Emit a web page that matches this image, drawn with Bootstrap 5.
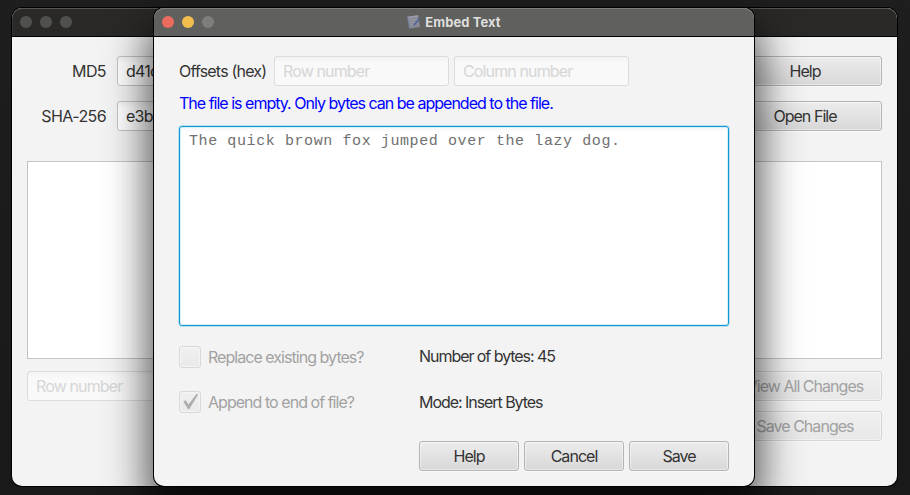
<!DOCTYPE html>
<html lang="en">
<head>
<meta charset="utf-8">
<meta name="viewport" content="width=device-width, initial-scale=1">
<title>Embed Text</title>
<link href="https://cdn.jsdelivr.net/npm/bootstrap@5.3.0/dist/css/bootstrap.min.css" rel="stylesheet">
<style>
  body { background: linear-gradient(180deg, #1e1e1e, #1b1b1b 50%, #191919); font-family: Inter, "Liberation Sans", sans-serif; font-size: 16px; line-height: 20px; letter-spacing: -.96px; color: #333; width: 910px; height: 495px; }
  .win { top: 8px; height: 478px; background: #f3f3f3; border-radius: 10px; box-shadow: 0 0 0 1px #000; }
  .win-main { left: 12px; width: 885px; }
  .win-dialog { left: 154px; width: 600px; box-shadow: 0 0 0 1px #000, 0 22px 42px 6px rgba(0,0,0,.68); }
  .titlebar { height: 29px; flex: none; background: #2a2927; border-bottom: 1px solid #000; border-radius: 10px 10px 0 0; box-shadow: inset 0 1px 0 #555, inset 1px 0 0 -0.5px #444; padding-left: 8px; gap: 8px; }
  .win-dialog .titlebar { background: #60605e; box-shadow: inset 0 1px 0 #7e7e7c; }
  .dot { width: 12px; height: 12px; background: #50504e; }
  .dot-close { background: #ec6a5e; }
  .dot-min { background: #f4be4f; }
  .dot-off { background: #7e7e7c; }
  .title-text { font-size: 13px; font-weight: 700; letter-spacing: .08px; color: #dededd; gap: 4px; line-height: 16px; left: 0; right: 0; top: 6px; }
  .main-body { padding: 19px 15px 0; }
  .field { height: 30px; padding: 0 8px; border: 1px solid #c4c4c4; border-radius: 3px; background: linear-gradient(#f3f3f3, #fff 6px); font: inherit; letter-spacing: -.75px; color: #333; min-width: 0; }
  .field:disabled { border-color: #dcdcdc; background: linear-gradient(#f3f3f3, #f9f9f9 6px); color: #d4d4d4; opacity: 1; letter-spacing: -.87px; }
  .field::placeholder { color: #d6d6d6; opacity: 1; }
  .key { width: 79px; margin-right: 11px; letter-spacing: -.6px; }
  .offset-key { width: 95px; letter-spacing: -.8px; }
  .fx-btn { height: 30px; padding: 0; border: 1px solid #b4b4b4; border-radius: 3px; background: linear-gradient(#ececec, #d8d8d8); box-shadow: inset 0 0 0 1px rgba(255,255,255,.45), 0 1px 0 #fafafa; color: #333; font: inherit; letter-spacing: inherit; }
  .fx-btn:disabled { border-color: #d4d4d4; background: linear-gradient(#f0f0f0, #e8e8e8); color: #a2a2a2; opacity: 1; }
  .side { width: 154px; flex: none; }
  .side-stack { row-gap: 10px; }
  .hash-row { margin-top: 15px; }
  .hexview { height: 198px; background: #fff; border: 1px solid #c4c4c4; margin: 30px 0 12px; }
  .dialog-body { padding: 19px 25px 0; }
  .offset-field { width: 175px; flex: none; }
  .offset-second { margin-left: 5px; }
  .notice { color: #00f; margin-top: 7px; height: 20px; letter-spacing: -.99px; }
  .editor { width: 550px; height: 200px; margin-top: 13px; padding: 6px 9px; border: 1px solid #0c98d2; border-radius: 3px; box-shadow: 0 0 0 1px rgba(3,158,211,.22), inset 0 0 0 1px #d9eff8; background: linear-gradient(#f6f6f6, #fff 6px); resize: none; outline: 0; font: 15px/18px "Liberation Mono", "Courier New", monospace; letter-spacing: .59px; color: #707070; }
  .options { margin-top: 20px; row-gap: 23px; display: grid; grid-template-columns: 240px 1fr; }
  .stat { letter-spacing: -1.05px; }
  .check { color: #a2a2a2; height: 22px; gap: 7px; }
  .check-box { width: 22px; height: 22px; border: 1px solid #d8d8d8; border-radius: 3px; background: linear-gradient(#f0f0f0, #e9e9e9); box-shadow: inset 0 0 0 1px #f4f4f4; }
  .actions { margin-top: 28px; padding-left: 240px; gap: 5px; }
  .actions .fx-btn { width: 100px; }
</style>
<script src="https://cdn.jsdelivr.net/npm/bootstrap@5.3.0/dist/js/bootstrap.bundle.min.js"></script>
</head>
<body class="position-relative overflow-hidden">
  <main class="win win-main position-absolute d-flex flex-column overflow-hidden">
    <header class="titlebar d-flex align-items-center">
      <span class="dot rounded-circle"></span><span class="dot rounded-circle"></span><span class="dot rounded-circle"></span>
    </header>
    <div class="main-body">
      <div class="d-flex align-items-center">
        <label class="key text-end" for="md5">MD5</label>
        <input id="md5" class="field flex-grow-1 me-2" value="d41d8cd98f00b204e9800998ecf8427e" readonly>
        <button class="fx-btn side">Help</button>
      </div>
      <div class="hash-row d-flex align-items-center">
        <label class="key text-end" for="sha">SHA-256</label>
        <input id="sha" class="field flex-grow-1 me-2" value="e3b0c44298fc1c149afbf4c8996fb924" readonly>
        <button class="fx-btn side">Open File</button>
      </div>
      <div class="hexview"></div>
      <div class="d-flex justify-content-between align-items-start">
        <input class="field offset-field" placeholder="Row number" disabled>
        <div class="side side-stack d-grid">
          <button class="fx-btn" disabled>View All Changes</button>
          <button class="fx-btn" disabled>Save Changes</button>
        </div>
      </div>
    </div>
  </main>

  <section class="win win-dialog position-absolute d-flex flex-column" role="dialog" aria-label="Embed Text">
    <header class="titlebar d-flex align-items-center position-relative">
      <span class="dot dot-close rounded-circle"></span><span class="dot dot-min rounded-circle"></span><span class="dot dot-off rounded-circle"></span>
      <div class="title-text position-absolute d-flex justify-content-center align-items-center">
        <svg width="14" height="14" viewBox="0 0 14 14" aria-hidden="true">
          <path d="M.5 1.700 11 .2 13 12 2.500 13.500Z" fill="#878b98"/>
          <path d="M.5 1.700 11 .2l.4 1.500L.9 3.200Z" fill="#9a9ca8"/>
          <path d="M.5 1.700 2.500 13.500" stroke="#7380a8" stroke-width=".8"/>
          <path d="m2.700 5 6-.8M3 7.500l4-.5M3.500 10l2-.3" stroke="#989a98" stroke-width="1"/>
          <path d="m12.300 2.800-5.300 6.200-.8 1.900 1.900-.9L13 4.300Z" fill="#4c5f9e"/>
        </svg>
        <span>Embed Text</span>
      </div>
    </header>
    <div class="dialog-body">
      <div class="d-flex align-items-center">
        <label class="offset-key" for="row">Offsets (hex)</label>
        <input id="row" class="field offset-field" placeholder="Row number" disabled>
        <input class="field offset-field offset-second" placeholder="Column number" disabled>
      </div>
      <div class="notice text-nowrap">The file is empty. Only bytes can be appended to the file.</div>
      <textarea class="editor d-block" spellcheck="false">The quick brown fox jumped over the lazy dog.</textarea>
      <div class="options">
        <div class="check d-flex align-items-center"><span class="check-box"></span><span>Replace existing bytes?</span></div>
        <div class="stat">Number of bytes: 45</div>
        <div class="check d-flex align-items-center">
          <span class="check-box d-flex"><svg width="20" height="20" viewBox="0 0 20 20" aria-hidden="true"><path d="m3.300 9.600 2.400-1.300 2.700 4.300L16.700 1.700l1.500.8-8.700 14.200-1.300.6Z" fill="#adadad"/></svg></span>
          <span>Append to end of file?</span></div>
        <div class="stat align-self-center">Mode: Insert Bytes</div>
      </div>
      <div class="actions d-flex">
        <button class="fx-btn">Help</button>
        <button class="fx-btn">Cancel</button>
        <button class="fx-btn">Save</button>
      </div>
    </div>
  </section>
</body>
</html>
